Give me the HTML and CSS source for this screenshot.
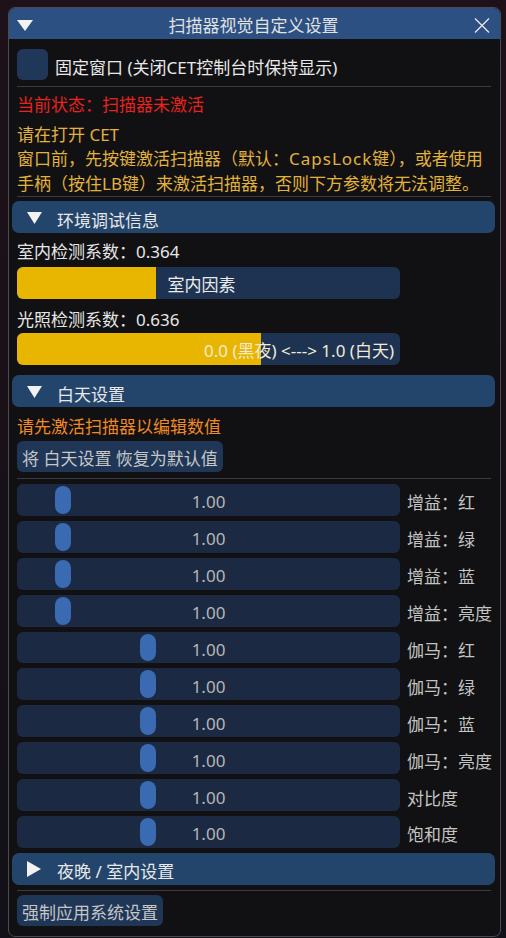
FILE: index.html
```html
<!DOCTYPE html>
<html lang="zh-CN">
<head>
<meta charset="utf-8">
<title>扫描器视觉自定义设置</title>
<link rel="stylesheet" href="styles.css">
</head>
<body>
<div class="window">
  <div class="titlebar">
    <svg class="tb-tri" width="16" height="11" viewBox="0 0 16 11"><polygon points="0,0 16,0 8,11" fill="#f2f2f2"/></svg>
    <span class="title">扫描器视觉自定义设置</span>
    <svg class="close" width="16" height="15" viewBox="0 0 16 15"><path d="M1 0.5 L15 14.5 M15 0.5 L1 14.5" stroke="#e8e8e8" stroke-width="1.3" fill="none"/></svg>
  </div>
  <div class="content">
    <div class="checkrow"><span class="checkbox"></span><span class="checktext">固定窗口 (关闭CET控制台时保持显示)</span></div>
    <div class="sep sep-a"></div>
    <p class="txt status">当前状态：扫描器未激活</p>
    <p class="txt notice">请在打开 CET<br>窗口前，先按键激活扫描器（默认：<span class="kbd">CapsLock</span>键），或者使用<br>手柄（按住LB键）来激活扫描器，否则下方参数将无法调整。</p>
    <div class="sep sep-b"></div>

    <div class="header hdr-env">
      <svg class="tri" width="15" height="12" viewBox="0 0 15 12"><polygon points="0,0 15,0 7.5,12" fill="#f2f2f2"/></svg>
      <span class="htext">环境调试信息</span>
    </div>
    <p class="txt label lbl-1">室内检测系数：0.364</p>
    <div class="progress pg-1">
      <div class="fill" style="width:36.4%"></div>
      <span class="pg-text pg-text-after" style="left:calc(36.4% + 11px)">室内因素</span>
    </div>
    <p class="txt label lbl-2">光照检测系数：0.636</p>
    <div class="progress pg-2">
      <div class="fill" style="width:63.6%"></div>
      <span class="pg-text pg-text-end">0.0 (黑夜) &lt;---&gt; 1.0 (白天)</span>
    </div>

    <div class="header hdr-day">
      <svg class="tri" width="15" height="12" viewBox="0 0 15 12"><polygon points="0,0 15,0 7.5,12" fill="#f2f2f2"/></svg>
      <span class="htext">白天设置</span>
    </div>
    <p class="txt warn">请先激活扫描器以编辑数值</p>
    <div class="btn btn-reset">将 白天设置 恢复为默认值</div>
    <div class="sep sep-c"></div>

    <div class="sliders">
      <div class="srow"><div class="slider"><span class="grab" style="left:38px"></span><span class="val">1.00</span></div><span class="slabel">增益：红</span></div>
      <div class="srow"><div class="slider"><span class="grab" style="left:38px"></span><span class="val">1.00</span></div><span class="slabel">增益：绿</span></div>
      <div class="srow"><div class="slider"><span class="grab" style="left:38px"></span><span class="val">1.00</span></div><span class="slabel">增益：蓝</span></div>
      <div class="srow"><div class="slider"><span class="grab" style="left:38px"></span><span class="val">1.00</span></div><span class="slabel">增益：亮度</span></div>
      <div class="srow"><div class="slider"><span class="grab" style="left:123px"></span><span class="val">1.00</span></div><span class="slabel">伽马：红</span></div>
      <div class="srow"><div class="slider"><span class="grab" style="left:123px"></span><span class="val">1.00</span></div><span class="slabel">伽马：绿</span></div>
      <div class="srow"><div class="slider"><span class="grab" style="left:123px"></span><span class="val">1.00</span></div><span class="slabel">伽马：蓝</span></div>
      <div class="srow"><div class="slider"><span class="grab" style="left:123px"></span><span class="val">1.00</span></div><span class="slabel">伽马：亮度</span></div>
      <div class="srow"><div class="slider"><span class="grab" style="left:123px"></span><span class="val">1.00</span></div><span class="slabel">对比度</span></div>
      <div class="srow"><div class="slider"><span class="grab" style="left:123px"></span><span class="val">1.00</span></div><span class="slabel">饱和度</span></div>
    </div>

    <div class="header hdr-night">
      <svg class="tri" width="14" height="16" viewBox="0 0 14 16"><polygon points="0,0 14,8 0,16" fill="#f2f2f2"/></svg>
      <span class="htext">夜晚 / 室内设置</span>
    </div>
    <div class="sep sep-d"></div>
    <div class="btn btn-apply">强制应用系统设置</div>
  </div>
</div>
</body>
</html>
```

FILE: styles.css
```css
* { box-sizing: border-box; margin: 0; padding: 0; }
html, body { height: 100%; }
body {
  background: linear-gradient(180deg, #1e1119 0%, #181018 55%, #121018 100%);
  font-family: "Noto Sans", "Noto Sans CJK SC", sans-serif;
  font-size: 17px;
  color: #e8e8e8;
  overflow: hidden;
}
.window {
  margin: 7px 0 0 8px;
  width: 493px;
  height: 930px;
  background: #111113;
  border: 1px solid #4a4a53;
  border-radius: 7px;
  overflow: hidden;
  display: flex;
  flex-direction: column;
}
.titlebar {
  height: 31px;
  flex: none;
  background: #2c5081;
  display: grid;
  grid-template-columns: 1fr auto 1fr;
  align-items: center;
  padding: 0 10px 0 8px;
}
.tb-tri { justify-self: start; margin-top: 1px; }
.title { color: #e2e2e2; line-height: 31px; padding-top: 2px; }
.close { justify-self: end; margin-top: 1px; }

.content {
  padding: 10px 9px 0 8px;
  display: flex;
  flex-direction: column;
}
.checkrow { display: flex; align-items: center; gap: 7px; height: 31px; }
.checkbox { width: 31px; height: 31px; border-radius: 6px; background: #21375a; flex: none; }
.checktext { padding-top: 3px; }
.sep { height: 1px; background: #3b3b43; flex: none; }
.sep-a { margin-top: 6px; }
.sep-b { margin-top: 0.5px; }
.sep-c { margin-top: 5.5px; }
.sep-d { margin-top: 5px; }

.txt { line-height: 24.3px; }
.status { color: #e8221c; margin-top: 6.3px; }
.notice { color: #e2b23e; margin-top: 5.4px; }
.kbd { letter-spacing: 1px; }
.warn { color: #f08a24; margin-top: 7.8px; }
.label { color: #e6e6e6; }
.lbl-1 { margin-top: 7px; }
.lbl-2 { margin-top: 8.3px; }

.header {
  height: 32px;
  margin: 0 -4px 0 -5px;
  background: #24456b;
  border-radius: 7px;
  display: flex;
  align-items: center;
  padding-left: 15px;
  gap: 15px;
  color: #e8e8e8;
  flex: none;
}
.header .tri { flex: none; margin-top: 1px; }
.htext { padding-top: 4px; }
.hdr-env { margin-top: 4px; }
.hdr-day { margin-top: 10px; }
.hdr-night { margin-top: 5px; gap: 16px; }

.progress {
  position: relative;
  width: 383px;
  height: 32px;
  background: #1e3352;
  border-radius: 6px;
  overflow: hidden;
  flex: none;
}
.pg-1 { margin-top: 2.8px; }
.pg-2 { margin-top: 1.4px; }
.fill { height: 100%; background: #e8b600; }
.pg-text {
  position: absolute;
  top: 2px;
  line-height: 32px;
  color: #ececec;
  white-space: nowrap;
}
.pg-text-end { right: 6px; color: #f2ead6; }

.btn {
  align-self: flex-start;
  height: 31px;
  line-height: 31px;
  padding: 2px 5px 0 5px;
  background: #1f3657;
  border-radius: 6px;
  color: #c6c6c6;
  flex: none;
  overflow: hidden;
}
.btn-reset { margin-top: 1.9px; }
.btn-apply { margin-top: 4px; }

.sliders {
  margin-top: 5px;
  display: flex;
  flex-direction: column;
  gap: 5px;
}
.srow { display: flex; align-items: center; gap: 7px; height: 31.9px; }
.slider {
  position: relative;
  width: 383px;
  height: 31.9px;
  background: #1b2a42;
  border-radius: 6px;
  display: flex;
  align-items: center;
  justify-content: center;
  flex: none;
}
.grab {
  position: absolute;
  top: 2px;
  bottom: 2px;
  width: 16px;
  border-radius: 8px;
  background: #3a6ab2;
}
.val { color: #b6b6b6; position: relative; padding-top: 4px; }
.slabel { color: #c4c4c4; white-space: nowrap; padding-top: 4px; }
```
